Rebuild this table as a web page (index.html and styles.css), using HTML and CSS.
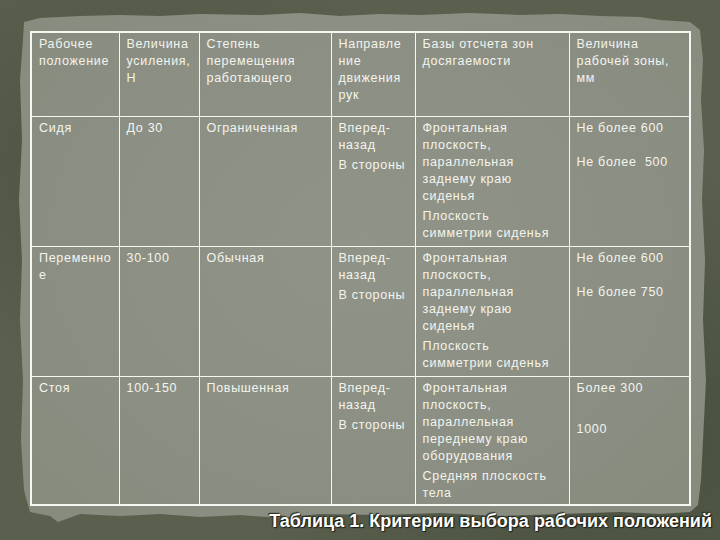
FILE: index.html
```html
<!DOCTYPE html>
<html lang="ru">
<head>
<meta charset="utf-8">
<title>Таблица 1</title>
<link rel="stylesheet" href="styles.css">
</head>
<body>
<div class="slide">
  <div class="paper"></div>
  <div class="content">
    <table class="crit">
      <colgroup>
        <col class="c1"><col class="c2"><col class="c3"><col class="c4"><col class="c5"><col class="c6">
      </colgroup>
      <tr class="head">
        <td>Рабочее<br>положение</td>
        <td>Величина<br>усиления,<br>Н</td>
        <td>Степень<br>перемещения<br>работающего</td>
        <td>Направле<br>ние<br>движения<br>рук</td>
        <td>Базы отсчета зон<br>досягаемости</td>
        <td>Величина<br>рабочей зоны,<br>мм</td>
      </tr>
      <tr class="row">
        <td>Сидя</td>
        <td>До 30</td>
        <td>Ограниченная</td>
        <td><p>Вперед-<br>назад</p><p>В стороны</p></td>
        <td><p>Фронтальная<br>плоскость,<br>параллельная<br>заднему краю<br>сиденья</p><p>Плоскость<br>симметрии сиденья</p></td>
        <td><p>Не более 600</p><p class="gap">Не более &nbsp;500</p></td>
      </tr>
      <tr class="row">
        <td>Переменно<br>е</td>
        <td>30-100</td>
        <td>Обычная</td>
        <td><p>Вперед-<br>назад</p><p>В стороны</p></td>
        <td><p>Фронтальная<br>плоскость,<br>параллельная<br>заднему краю<br>сиденья</p><p>Плоскость<br>симметрии сиденья</p></td>
        <td><p>Не более 600</p><p class="gap">Не более 750</p></td>
      </tr>
      <tr class="row last">
        <td>Стоя</td>
        <td>100-150</td>
        <td>Повышенная</td>
        <td><p>Вперед-<br>назад</p><p>В стороны</p></td>
        <td><p>Фронтальная<br>плоскость,<br>параллельная<br>переднему краю<br>оборудования</p><p>Средняя плоскость<br>тела</p></td>
        <td><p>Более 300</p><p class="gap2">1000</p></td>
      </tr>
    </table>
    <div class="caption">Таблица 1. Критерии выбора рабочих положений</div>
  </div>
</div>
</body>
</html>
```
FILE: styles.css
```css
html, body {
  margin: 0;
  padding: 0;
}
body {
  width: 720px;
  height: 540px;
  overflow: hidden;
  font-family: "Liberation Sans", Arial, sans-serif;
}
.slide {
  position: relative;
  width: 720px;
  height: 540px;
  background:
    radial-gradient(ellipse at 20% 30%, rgba(40,46,32,0.25), rgba(0,0,0,0) 40%),
    radial-gradient(ellipse at 85% 80%, rgba(30,36,24,0.3), rgba(0,0,0,0) 45%),
    #5a604d;
  overflow: hidden;
}
.paper {
  position: absolute;
  inset: 0;
  background:
    radial-gradient(ellipse at 50% 45%, #909488 0%, #8b8f83 60%, #858a7c 100%);
  clip-path: polygon(24px 22px, 40px 18px, 80px 16px, 120px 15px, 160px 16px, 200px 14px, 260px 15px, 300px 13px, 340px 16px, 380px 14px, 420px 15px, 470px 13px, 520px 15px, 560px 14px, 600px 16px, 640px 17px, 660px 20px, 690px 22px,
    700px 30px, 703px 60px, 701px 100px, 704px 150px, 702px 200px, 705px 260px, 703px 320px, 706px 380px, 703px 440px, 701px 480px, 698px 505px,
    690px 512px, 660px 514px, 620px 512px, 560px 514px, 500px 516px, 440px 513px, 380px 515px, 320px 514px, 280px 518px, 240px 515px, 200px 517px, 160px 514px, 120px 516px, 80px 514px, 58px 522px, 50px 516px, 30px 512px,
    24px 490px, 21px 440px, 23px 380px, 20px 320px, 22px 260px, 19px 200px, 22px 140px, 20px 80px, 23px 40px);
}
.content {
  position: relative;
  padding: 31px 0 0 30px;
}
.crit {
  border-collapse: collapse;
  table-layout: fixed;
  width: 659px;
  border: 2px solid #f7f7f2;
  color: #f4f4ee;
  font-size: 12.5px;
  letter-spacing: 0.7px;
  line-height: 17px;
}
.c1 { width: 88px; }
.c2 { width: 80px; }
.c3 { width: 132px; }
.c4 { width: 84px; }
.c5 { width: 154px; }
.c6 { width: 121px; }
.crit td {
  border: 1px solid #f7f7f2;
  vertical-align: top;
  padding: 3px 4px 0 7px;
  white-space: nowrap;
  overflow: hidden;
}
.crit p {
  margin: 0;
}
.crit p + p {
  margin-top: 3px;
}
.crit p.gap {
  margin-top: 17px;
}
.crit p.gap2 {
  margin-top: 24px;
}
.head td { height: 80px; }
.row td { height: 126px; }
.row.last td { height: 124px; }
.caption {
  margin: 5px 8px 0 0;
  text-align: right;
  color: #ffffff;
  font-weight: bold;
  font-size: 18px;
  line-height: 20px;
  text-shadow: 0 0 2px #1d2016, 1px 1px 1px #1d2016, -1px -1px 1px #2a2e22;
}
```
